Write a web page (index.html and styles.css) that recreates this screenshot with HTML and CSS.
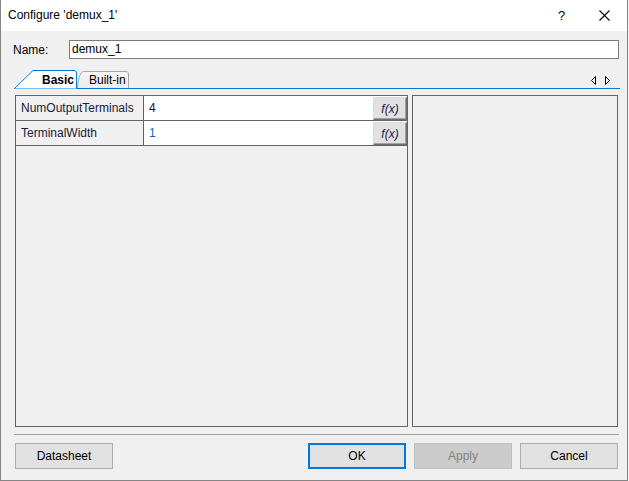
FILE: index.html
```html
<!DOCTYPE html>
<html>
<head>
<meta charset="utf-8">
<link rel="stylesheet" href="styles.css">
</head>
<body>
<div class="window">
  <div class="titlebar">
    <span class="title">Configure 'demux_1'</span>
    <span class="help">?</span>
    <span class="close"><svg width="11" height="11" viewBox="0 0 11 11"><path d="M0.5 0.5 L10.5 10.5 M10.5 0.5 L0.5 10.5" stroke="#000" stroke-width="1.1" fill="none"/></svg></span>
  </div>
  <div class="body">
    <div class="name-row">
      <span class="name-label">Name:</span>
      <div class="name-input">demux_1</div>
    </div>
    <div class="tabstrip">
      <div class="tab tab-basic">
        <svg class="tab-shape" width="63" height="19" viewBox="0 0 63 19"><path d="M0.5 18.5 L19 0.5 H60 Q62.5 0.5 62.5 3 V18.5" fill="#fff" stroke="#0078d7" stroke-width="1"/></svg>
        <span class="tab-text bold">Basic</span>
      </div>
      <div class="tab tab-builtin">
        <svg class="tab-shape" width="52" height="18" viewBox="0 0 52 18"><defs><linearGradient id="g" x1="0" y1="0" x2="0" y2="1"><stop offset="0" stop-color="#f6f6f6"/><stop offset="1" stop-color="#ececec"/></linearGradient></defs><path d="M0.5 18 C1 10 3 1.5 6.5 1.5 H49 Q51.5 1.5 51.5 4 V18" fill="url(#g)" stroke="#a5a5a5" stroke-width="1"/></svg>
        <span class="tab-text">Built-in</span>
      </div>
      <div class="tab-arrows">
        <svg width="19" height="9" viewBox="0 0 19 9"><path d="M4.5 0.5 L0.5 4.5 L4.5 8.5 Z" fill="none" stroke="#000"/><path d="M14.5 0.5 L18.5 4.5 L14.5 8.5 Z" fill="none" stroke="#000"/></svg>
      </div>
    </div>
    <div class="panels">
      <div class="grid-panel">
        <div class="prow">
          <div class="pname">NumOutputTerminals</div>
          <div class="pvalue"><span class="val dark">4</span><span class="fx">f(x)</span></div>
        </div>
        <div class="prow">
          <div class="pname">TerminalWidth</div>
          <div class="pvalue"><span class="val blue">1</span><span class="fx">f(x)</span></div>
        </div>
      </div>
      <div class="side-panel"></div>
    </div>
    <div class="separator"></div>
    <div class="buttons">
      <div class="btn">Datasheet</div>
      <div class="btn btn-ok">OK</div>
      <div class="btn btn-disabled">Apply</div>
      <div class="btn">Cancel</div>
    </div>
  </div>
</div>
</body>
</html>
```
FILE: styles.css
```css
html, body {
  margin: 0;
  padding: 0;
  background: #f0f0f0;
}
body {
  font-family: "Liberation Sans", Arial, sans-serif;
  font-size: 12px;
  color: #000;
}
.window {
  width: 628px;
  height: 481px;
  box-sizing: border-box;
  border-left: 1px solid #858585;
  border-right: 1px solid #858585;
  border-bottom: 1px solid #858585;
  background: #f0f0f0;
  display: flex;
  flex-direction: column;
}
.titlebar {
  height: 31px;
  background: #fff;
  display: flex;
  align-items: center;
  padding-left: 7px;
}
.title {
  font-size: 12px;
  color: #000;
  flex: 1;
  margin-top: -1px;
}
.help {
  font-size: 13px;
  width: 14px;
  margin-right: 27px;
  margin-top: -1px;
}
.close {
  width: 11px;
  height: 11px;
  margin-right: 17px;
  margin-top: -1px;
  display: flex;
}
.body {
  flex: 1;
  display: flex;
  flex-direction: column;
  padding: 9px 8px 0 13px;
}
.name-row {
  display: flex;
  align-items: center;
  height: 19px;
}
.name-label {
  width: 56px;
  flex: none;
  margin-left: -1px;
}
.name-input {
  width: 550px;
  flex: none;
  height: 19px;
  box-sizing: border-box;
  border: 1px solid #7a7a7a;
  background: #fff;
  padding-left: 2px;
  line-height: 17px;
}
.tabstrip {
  margin-top: 11px;
  height: 18px;
  width: 606px;
  border-bottom: 1px solid #0078d7;
  display: flex;
  align-items: stretch;
}
.tab {
  position: relative;
  height: 18px;
  flex: none;
}
.tab-shape {
  position: absolute;
  left: 0;
  top: 0;
}
.tab-basic {
  width: 63px;
  z-index: 2;
}
.tab-builtin {
  width: 52px;
  z-index: 1;
}
.tab-text {
  position: relative;
  display: block;
  line-height: 18px;
  padding-top: 1px;
}
.tab-basic .tab-text {
  padding-left: 28px;
}
.tab-builtin .tab-text {
  padding-left: 12px;
}
.bold {
  font-weight: bold;
}
.tab-arrows {
  margin-left: auto;
  margin-right: 10px;
  display: flex;
  align-items: center;
  padding-top: 2px;
}
.panels {
  margin-top: 6px;
  display: flex;
  height: 332px;
  gap: 4px;
  padding-left: 1px;
}
.grid-panel {
  width: 393px;
  height: 332px;
  box-sizing: border-box;
  border: 1px solid #646464;
  background: #f0f0f0;
}
.side-panel {
  width: 206px;
  height: 332px;
  box-sizing: border-box;
  border: 1px solid #646464;
  background: #f0f0f0;
}
.prow {
  display: flex;
  height: 25px;
  box-sizing: border-box;
  border-bottom: 1px solid #646464;
}
.pname {
  width: 128px;
  border-right: 1px solid #646464;
  padding-left: 5px;
  line-height: 24px;
  color: #1a1a3a;
  box-sizing: border-box;
}
.pvalue {
  flex: 1;
  background: #fff;
  display: flex;
  align-items: stretch;
}
.val {
  flex: 1;
  padding-left: 5px;
  line-height: 24px;
}
.val.dark {
  color: #1a1040;
}
.val.blue {
  color: #1565c0;
}
.fx {
  width: 34px;
  box-sizing: border-box;
  background: #e1e1e1;
  border-top: 1px solid #dcdcdc;
  border-left: 1px solid #dcdcdc;
  border-right: 1px solid #6e6e6e;
  border-bottom: 1px solid #6e6e6e;
  box-shadow: inset -1px -1px 0 #a0a0a0;
  font-style: italic;
  text-align: center;
  line-height: 22px;
  color: #1a1a50;
  margin-top: 1px;
}
.separator {
  margin-top: 7px;
  height: 1px;
  width: 605px;
  background: #a0a0a0;
}
.buttons {
  margin-top: 8px;
  display: flex;
  gap: 8px;
  padding-left: 1px;
  padding-right: 1px;
}
.btn {
  width: 98px;
  flex: none;
  height: 26px;
  box-sizing: border-box;
  border: 1px solid #adadad;
  background: #e1e1e1;
  text-align: center;
  line-height: 24px;
  font-size: 12px;
}
.btn-ok {
  margin-left: auto;
  border: 2px solid #0078d7;
  line-height: 22px;
}
.btn-disabled {
  background: #cccccc;
  border-color: #bfbfbf;
  color: #838383;
}
```
